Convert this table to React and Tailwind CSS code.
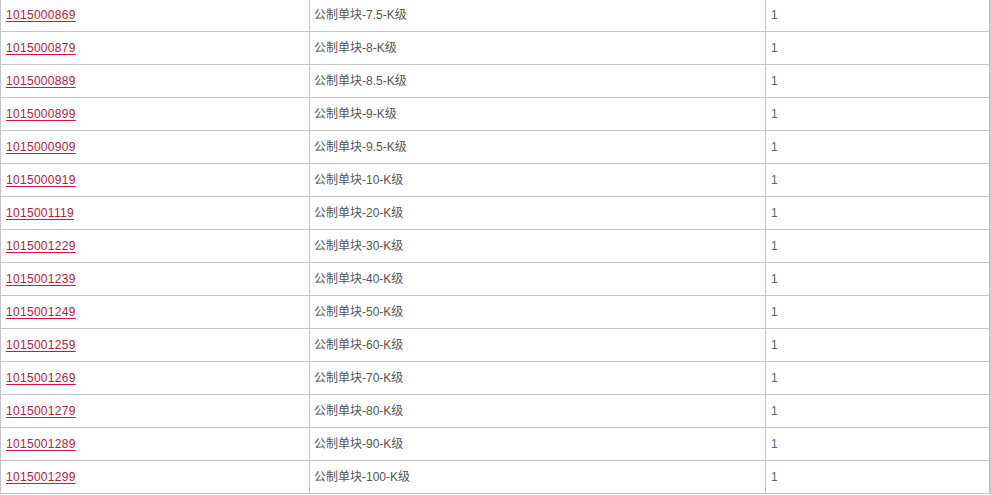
const rows = [
    ["1015000869", "公制单块-7.5-K级"],
    ["1015000879", "公制单块-8-K级"],
    ["1015000889", "公制单块-8.5-K级"],
    ["1015000899", "公制单块-9-K级"],
    ["1015000909", "公制单块-9.5-K级"],
    ["1015000919", "公制单块-10-K级"],
    ["1015001119", "公制单块-20-K级"],
    ["1015001229", "公制单块-30-K级"],
    ["1015001239", "公制单块-40-K级"],
    ["1015001249", "公制单块-50-K级"],
    ["1015001259", "公制单块-60-K级"],
    ["1015001269", "公制单块-70-K级"],
    ["1015001279", "公制单块-80-K级"],
    ["1015001289", "公制单块-90-K级"],
    ["1015001299", "公制单块-100-K级"],
];

function App() {
    return (
        <div className="w-[991px] h-[495px] overflow-hidden bg-white">
            <div
                className="-mt-[2px] w-[991px] border-l border-r-2 border-[#c4c4c4] text-[12px] text-[#555]"
                style={{ fontFamily: '"Liberation Sans", Arial, "Noto Sans CJK SC", sans-serif' }}
            >
                {rows.map(([code, name]) => (
                    <div key={code} className="grid grid-cols-[309px_456px_1fr] h-[33px] border-t border-[#c4c4c4]">
                        <div className="flex items-center pl-[5px] border-r border-[#c4c4c4]">
                            <a href="#" className="tracking-[0.3px] text-[#b3203a] underline decoration-[#d3143c] underline-offset-[2px]">
                                {code}
                            </a>
                        </div>
                        <div className="flex items-center pl-[4px] border-r border-[#c4c4c4]">{name}</div>
                        <div className="flex items-center pl-[5px] text-[#5a5a7a]">1</div>
                    </div>
                ))}
                <div className="border-t border-[#c4c4c4]" />
            </div>
        </div>
    );
}

export default App;
